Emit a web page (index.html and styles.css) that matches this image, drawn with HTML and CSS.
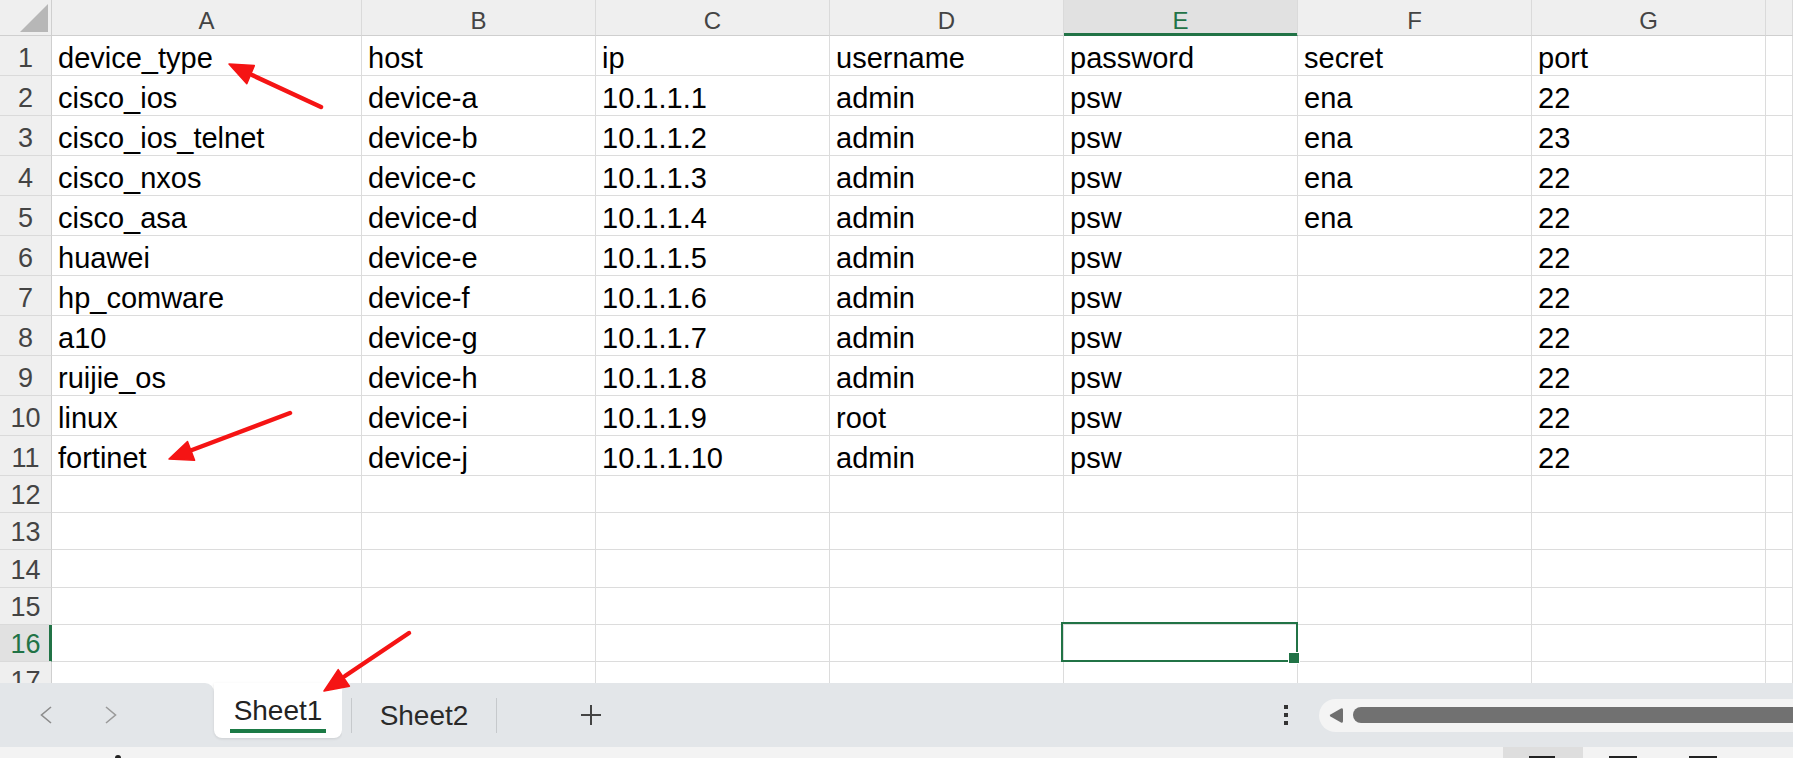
FILE: index.html
```html
<!DOCTYPE html>
<html>
<head>
<meta charset="utf-8">
<link rel="stylesheet" href="styles.css">
</head>
<body>
<div class="grid">
  <div class="corner"><svg width="52" height="36" viewBox="0 0 52 36"><polygon points="20,32 48,32 48,4" fill="#b7b7b7"/></svg></div>
  <div class="ch">A</div><div class="ch">B</div><div class="ch">C</div><div class="ch">D</div><div class="ch sel">E</div><div class="ch">F</div><div class="ch">G</div><div class="ch"></div>

  <div class="rh">1</div><div class="c">device_type</div><div class="c">host</div><div class="c">ip</div><div class="c">username</div><div class="c">password</div><div class="c">secret</div><div class="c">port</div><div class="c"></div>
  <div class="rh">2</div><div class="c">cisco_ios</div><div class="c">device-a</div><div class="c">10.1.1.1</div><div class="c">admin</div><div class="c">psw</div><div class="c">ena</div><div class="c">22</div><div class="c"></div>
  <div class="rh">3</div><div class="c">cisco_ios_telnet</div><div class="c">device-b</div><div class="c">10.1.1.2</div><div class="c">admin</div><div class="c">psw</div><div class="c">ena</div><div class="c">23</div><div class="c"></div>
  <div class="rh">4</div><div class="c">cisco_nxos</div><div class="c">device-c</div><div class="c">10.1.1.3</div><div class="c">admin</div><div class="c">psw</div><div class="c">ena</div><div class="c">22</div><div class="c"></div>
  <div class="rh">5</div><div class="c">cisco_asa</div><div class="c">device-d</div><div class="c">10.1.1.4</div><div class="c">admin</div><div class="c">psw</div><div class="c">ena</div><div class="c">22</div><div class="c"></div>
  <div class="rh">6</div><div class="c">huawei</div><div class="c">device-e</div><div class="c">10.1.1.5</div><div class="c">admin</div><div class="c">psw</div><div class="c"></div><div class="c">22</div><div class="c"></div>
  <div class="rh">7</div><div class="c">hp_comware</div><div class="c">device-f</div><div class="c">10.1.1.6</div><div class="c">admin</div><div class="c">psw</div><div class="c"></div><div class="c">22</div><div class="c"></div>
  <div class="rh">8</div><div class="c">a10</div><div class="c">device-g</div><div class="c">10.1.1.7</div><div class="c">admin</div><div class="c">psw</div><div class="c"></div><div class="c">22</div><div class="c"></div>
  <div class="rh">9</div><div class="c">ruijie_os</div><div class="c">device-h</div><div class="c">10.1.1.8</div><div class="c">admin</div><div class="c">psw</div><div class="c"></div><div class="c">22</div><div class="c"></div>
  <div class="rh">10</div><div class="c">linux</div><div class="c">device-i</div><div class="c">10.1.1.9</div><div class="c">root</div><div class="c">psw</div><div class="c"></div><div class="c">22</div><div class="c"></div>
  <div class="rh">11</div><div class="c">fortinet</div><div class="c">device-j</div><div class="c">10.1.1.10</div><div class="c">admin</div><div class="c">psw</div><div class="c"></div><div class="c">22</div><div class="c"></div>
  <div class="rh">12</div><div class="c"></div><div class="c"></div><div class="c"></div><div class="c"></div><div class="c"></div><div class="c"></div><div class="c"></div><div class="c"></div>
  <div class="rh">13</div><div class="c"></div><div class="c"></div><div class="c"></div><div class="c"></div><div class="c"></div><div class="c"></div><div class="c"></div><div class="c"></div>
  <div class="rh">14</div><div class="c"></div><div class="c"></div><div class="c"></div><div class="c"></div><div class="c"></div><div class="c"></div><div class="c"></div><div class="c"></div>
  <div class="rh">15</div><div class="c"></div><div class="c"></div><div class="c"></div><div class="c"></div><div class="c"></div><div class="c"></div><div class="c"></div><div class="c"></div>
  <div class="rh sel">16</div><div class="c"></div><div class="c"></div><div class="c"></div><div class="c"></div><div class="c act"></div><div class="c"></div><div class="c"></div><div class="c"></div>
  <div class="rh">17</div><div class="c"></div><div class="c"></div><div class="c"></div><div class="c"></div><div class="c"></div><div class="c"></div><div class="c"></div><div class="c"></div>
</div>

<div class="tabbar">
  <div class="nav">
    <svg class="prev" width="12" height="18" viewBox="0 0 12 18"><polyline points="11,1 1.5,9 11,17" fill="none" stroke="#8c8c8c" stroke-width="1.6"/></svg>
    <svg class="next" width="12" height="18" viewBox="0 0 12 18"><polyline points="1,1 10.5,9 1,17" fill="none" stroke="#9a9a9a" stroke-width="1.6"/></svg>
  </div>
  <div class="tab-active">
    <span class="tab-label">Sheet1</span>
    <span class="tab-line"></span>
  </div>
  <div class="rest">
    <span class="sep first"></span>
    <div class="tab2">Sheet2</div>
    <span class="sep"></span>
    <div class="add"><svg width="22" height="22" viewBox="0 0 22 22"><path d="M11 1v20M1 11h20" stroke="#444" stroke-width="2"/></svg></div>
    <div class="dots"><i></i><i></i><i></i></div>
    <div class="track">
      <svg class="larrow" width="14" height="17" viewBox="0 0 14 17"><path d="M12 1.5 Q14 0.5 14 3 V14 Q14 16.5 12 15.5 L1.5 9.5 Q0 8.5 1.5 7.5 Z" fill="#6f6f6f"/></svg>
      <div class="thumb"></div>
    </div>
  </div>
</div>

<div class="status">
  <span class="mark"></span>
  <div class="viewbox"><span class="vi"></span></div>
  <span class="vi v2"></span>
  <span class="vi v3"></span>
</div>

<svg class="annot" width="1793" height="758" viewBox="0 0 1793 758">
  <g stroke="#f51414" stroke-width="4.5" stroke-linecap="round" fill="#f51414">
    <line x1="321" y1="107" x2="252" y2="75"/>
    <polygon points="229,64 254.3,65.6 246.8,83.8" stroke-width="1.5" stroke-linejoin="round"/>
    <line x1="290" y1="413" x2="192" y2="450"/>
    <polygon points="169,459 187.5,441.6 194.6,460.3" stroke-width="1.5" stroke-linejoin="round"/>
    <line x1="409" y1="633" x2="345" y2="676"/>
    <polygon points="324,691 338.2,669.6 349.4,686.2" stroke-width="1.5" stroke-linejoin="round"/>
  </g>
</svg>
</body>
</html>
```

FILE: styles.css
```css
* { box-sizing: border-box; margin: 0; padding: 0; }
html, body { width: 1793px; height: 758px; overflow: hidden; background: #fff; }
body {
  font-family: "Liberation Sans", Arial, sans-serif;
  display: flex;
  flex-direction: column;
  position: relative;
}

.grid {
  height: 683px;
  flex: none;
  display: grid;
  grid-template-columns: 52px 310px repeat(6, 234px) 1fr;
  grid-template-rows: 36px repeat(11, 40px) 37px 37px 38px 37px 37px 37px;
  overflow: hidden;
}

.corner {
  background: #efefef;
  border-right: 1px solid #cfcfcf;
  border-bottom: 1px solid #cfcfcf;
}
.corner svg { display: block; }

.ch {
  background: #efefef;
  border-right: 1px solid #dadada;
  border-bottom: 1px solid #cfcfcf;
  font-size: 24px;
  color: #444;
  display: flex;
  align-items: flex-end;
  justify-content: center;
  line-height: normal;
}
.ch.sel {
  background: #e1e1e1;
  color: #217346;
  border-bottom-color: #217346;
  box-shadow: inset 0 -2px 0 #217346;
}

.rh {
  background: #efefef;
  border-right: 1px solid #cfcfcf;
  border-bottom: 1px solid #dadada;
  font-size: 27px;
  color: #444;
  display: flex;
  align-items: flex-end;
  justify-content: center;
  padding-bottom: 1px;
  line-height: normal;
}
.rh.sel {
  background: #e1e1e1;
  color: #217346;
  border-right-color: #217346;
  box-shadow: inset -2px 0 0 #217346;
}

.c {
  border-right: 1px solid #dcdcdc;
  border-bottom: 1px solid #dcdcdc;
  font-size: 29px;
  color: #000;
  padding-left: 6px;
  display: flex;
  align-items: flex-end;
  white-space: nowrap;
  overflow: hidden;
  line-height: normal;
}
.c.act { position: relative; overflow: visible; }
.c.act::before {
  content: "";
  position: absolute;
  left: -3px; top: -3px; right: -1px; bottom: -1px;
  border: 2px solid #217346;
}
.c.act::after {
  content: "";
  position: absolute;
  right: -3px; bottom: -3px;
  width: 10px; height: 10px;
  background: #217346;
  border: 1px solid #fff;
}

/* sheet tab bar */
.tabbar {
  height: 64px;
  flex: none;
  display: flex;
  background: linear-gradient(#fff 0 12px, #e3e6e9 12px);
}
.nav {
  width: 214px;
  flex: none;
  background: #e3e6e9;
  border-top-right-radius: 9px;
  display: flex;
  align-items: center;
}
.nav svg { display: block; }
.prev { margin-left: 40px; }
.next { margin-left: 53px; }

.tab-active {
  width: 128px;
  height: 55px;
  flex: none;
  background: #fff;
  border-radius: 0 0 8px 8px;
  box-shadow: 0 1px 3px rgba(0,0,0,0.10);
  display: flex;
  flex-direction: column;
  align-items: center;
  padding-top: 12px;
}
.tab-label {
  font-size: 28px;
  line-height: 32px;
  color: #222;
}
.tab-line {
  display: block;
  width: 96px;
  height: 4px;
  margin-top: 2px;
  background: #1b7a45;
}

.rest {
  flex: 1;
  background: #e3e6e9;
  border-top-left-radius: 9px;
  display: flex;
  align-items: center;
  overflow: hidden;
}
.sep {
  width: 1px;
  height: 35px;
  flex: none;
  background: #c6c9cc;
}
.sep.first { margin-left: 9px; }
.tab2 {
  width: 144px;
  flex: none;
  align-self: stretch;
  padding-top: 17px;
  text-align: center;
  font-size: 28px;
  line-height: 32px;
  color: #2a2a2a;
}
.add {
  width: 188px;
  flex: none;
  display: flex;
  justify-content: center;
}
.add svg { display: block; }

.dots {
  margin-left: auto;
  width: 30px;
  flex: none;
  display: flex;
  flex-direction: column;
  align-items: center;
  gap: 4px;
  margin-right: 18px;
}
.dots i {
  display: block;
  width: 4px;
  height: 4px;
  background: #333;
}

.track {
  width: 474px;
  height: 33px;
  flex: none;
  background: #f4f4f4;
  border-radius: 17px 0 0 17px;
  display: flex;
  align-items: center;
  padding-left: 10px;
}
.larrow { display: block; flex: none; }
.thumb {
  flex: 1;
  height: 16px;
  margin-left: 10px;
  background: #717171;
  border-radius: 8px 0 0 8px;
}

/* status strip */
.status {
  height: 11px;
  flex: none;
  background: #f3f3f3;
  display: flex;
  align-items: flex-start;
}
.mark {
  display: block;
  width: 6px;
  height: 3px;
  margin-left: 115px;
  margin-top: 8px;
  background: #222;
  border-radius: 3px 3px 0 0;
}
.viewbox {
  margin-left: 1382px;
  width: 80px;
  height: 11px;
  background: #dedede;
  display: flex;
  padding-left: 26px;
}
.vi {
  display: block;
  width: 26px;
  height: 2px;
  margin-top: 9px;
  background: #222;
}
.v2 { margin-left: 26px; width: 28px; }
.v3 { margin-left: 52px; width: 28px; }

.annot {
  position: absolute;
  left: 0;
  top: 0;
  pointer-events: none;
}
```
